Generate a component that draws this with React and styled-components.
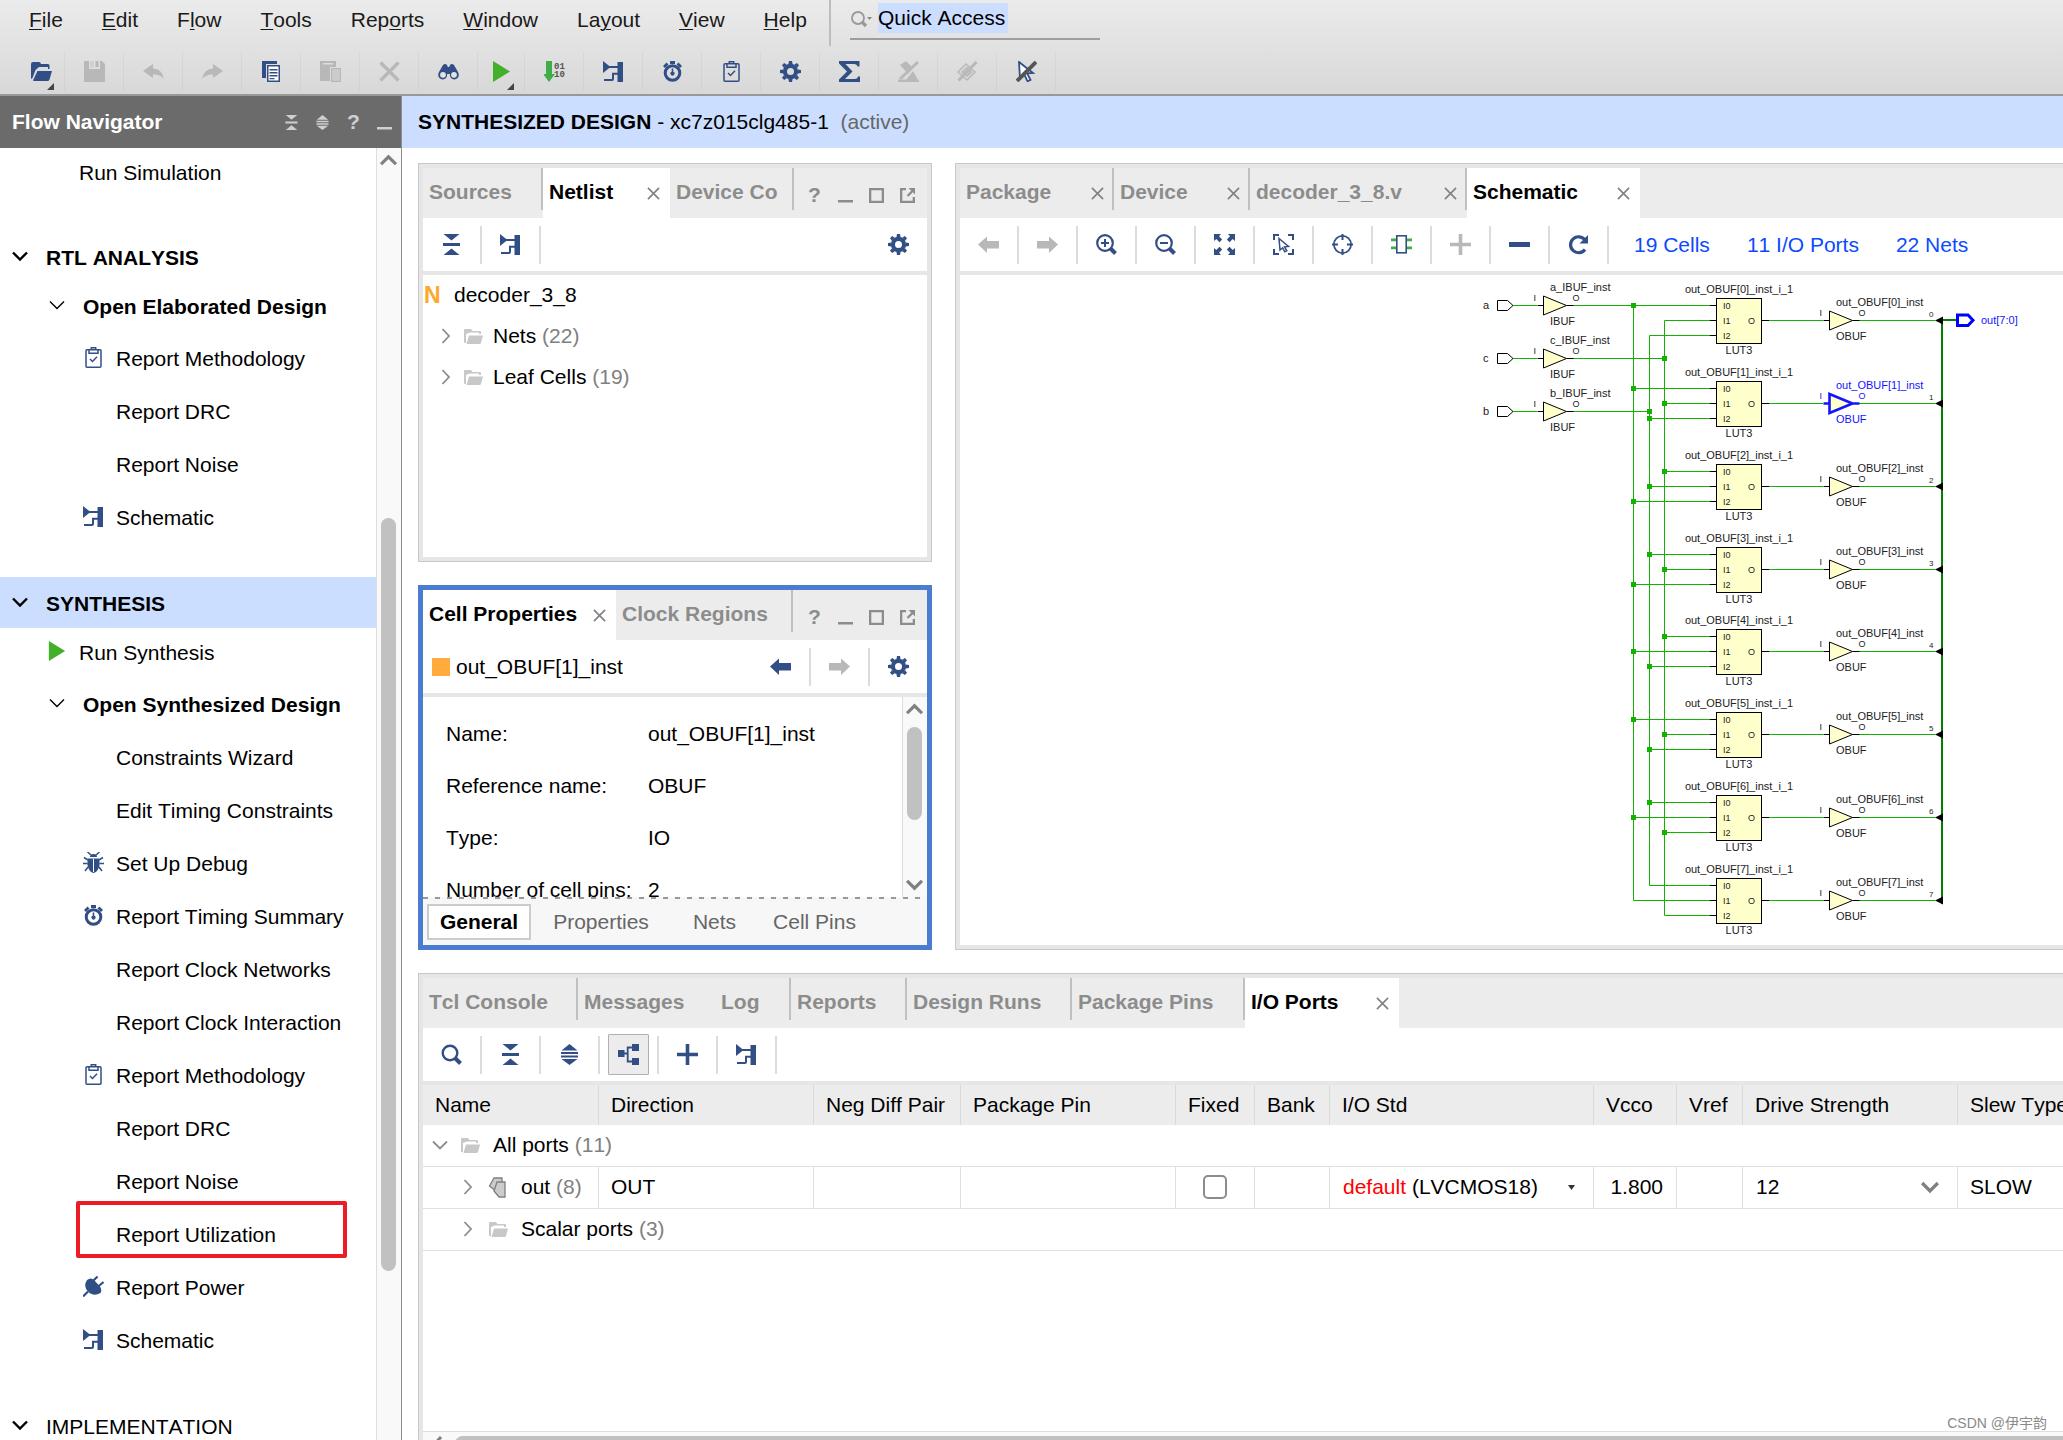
import React from "react";
import styled, { createGlobalStyle } from "styled-components";

const BLUE = "#324f85";
const GREY = "#b8b8b8";
const DIM = "#8c8c8c";

const GlobalStyle = createGlobalStyle`
  *, *::before, *::after { box-sizing: border-box; }
  html, body { margin: 0; padding: 0; }
  body {
    font-family: "Liberation Sans", "Noto Sans CJK SC", sans-serif;
    font-size: 21px;
    line-height: 24px;
    font-kerning: none;
    color: #000;
    background: #fff;
  }
  button, input, select {
    font: inherit;
    font-kerning: none;
    color: inherit;
    background: none;
    border: 0;
    padding: 0;
    margin: 0;
    border-radius: 0;
    outline: none;
  }
  svg { display: block; flex: none; }
`;

/* ---------- icons ---------- */

const Icon = ({ size = 21, color = BLUE, children, ...rest }) => (
  <svg width={size} height={size} viewBox="0 0 21 21" fill={color} stroke="none" aria-hidden="true" {...rest}>
    {children}
  </svg>
);

const FolderOpen = (p) => (
  <Icon {...p}>
    <path d="M0 3q0-2 2-2h6q1.500 0 2 2h7q1.500 0 1.500 1.500V8H17V6H8L4.500 9 1.500 17 0 18z" />
    <path d="M6.500 10H21l-2.500 8.500q-.4 1.500-2 1.500H2.800q-1 0-.6-1z" />
  </Icon>
);
const Folder = (p) => (
  <Icon color="#c8c8c8" {...p}>
    <path d="M1 4q0-1 1-1h6l1.500 2H17q1 0 1 1v2h-2V6.500H7L3 8v9H2q-1 0-1-1z" />
    <path d="M6 9.500h14L18 17q-.3 1-1.500 1H3.500z" />
  </Icon>
);
const Save = (p) => (
  <Icon color={GREY} {...p}>
    <path d="M0 0h5v8h11V0h2l3 3v18H0z" />
    <path d="M11.500 0h3v6h-3z" />
    <path d="M6 0h4v6.500H6z" opacity=".35" />
  </Icon>
);
const Undo = (p) => (
  <Icon color={GREY} {...p}>
    <path d="M0 10l10-7v4.500q9 0 11 10.500-4-5-11-4.500V17z" />
  </Icon>
);
const Redo = (p) => (
  <Icon color={GREY} {...p}>
    <path d="M21 10L11 3v4.500Q2 7.500 0 18q4-5 11-4.500V17z" />
  </Icon>
);
const Copy = (p) => (
  <Icon {...p}>
    <path d="M1 0h15v3H5v14H1z" />
    <path d="M6 4h13v17H6z" />
    <path d="M7.500 5.500h10v14h-10z" fill="#fff" />
    <path d="M8.500 8h8v1.500h-8zM8.500 11h8v1.500h-8zM8.500 14h8v1.500h-8zM8.500 17h5v1.300h-5z" />
  </Icon>
);
const Paste = (p) => (
  <Icon color={GREY} {...p}>
    <path d="M0 0h16v6h-6v14H0z" />
    <path d="M3 2h10v1.500H3z" fill="#ddd" />
    <path d="M11 7h10v14H11z" />
    <path d="M12.200 8.200h7.600v11.600h-7.600z" fill="#ccc" />
  </Icon>
);
const Cross = (p) => (
  <Icon {...p}>
    <path d="M1.500 1.500l18 18M19.500 1.500l-18 18" stroke={p.color || GREY} strokeWidth={p.weight || 3.4} fill="none" />
  </Icon>
);
const Binoculars = (p) => (
  <Icon {...p}>
    <path d="M5 4q2-2 4 0l.8 2h1.400L12 4q2-2 4 0l4 7q2 4-1 6.500-3.500 2-6-.5-1.500-2-1-4H9q.5 2-1 4-2.500 2.500-6 .5-3-2.500-1-6.500z" />
    <circle cx="5" cy="13.800" r="2.900" fill="#e4e4e4" />
    <circle cx="16" cy="13.800" r="2.900" fill="#e4e4e4" />
  </Icon>
);
const Play = (p) => (
  <Icon color="#43b02a" {...p}>
    <path d="M2 0l17 10.500L2 21z" />
  </Icon>
);
const Bitstream = (p) => (
  <Icon color="#3fae49" {...p}>
    <path d="M2 0h6v13h3L5 21-1 13h3z" />
    <g fill="#555" fontFamily="Liberation Mono, monospace" fontSize="9" fontWeight="700">
      <text x="10" y="8">01</text>
      <text x="10" y="16">10</text>
    </g>
  </Icon>
);
const SchematicIcon = (p) => (
  <Icon {...p}>
    <path d="M0 0l7.500 6L0 12z" />
    <path d="M14.500 1H20v20h-5.500z" />
    <path d="M6 5h9v2H6zM12.500 11.800H15v2h-2.500zM9 11.800h5v2h-3V18q0 2-2 2H1v-2h8z" />
  </Icon>
);
const Clock = (p) => (
  <Icon {...p}>
    <path d="M8 0h5v3H8zM1 5l3.500-3.500 2 2L3 7zM20 5l-3.500-3.500-2 2L18 7z" />
    <circle cx="10.500" cy="12" r="7.300" fill="none" stroke={BLUE} strokeWidth="3" />
    <path d="M9.700 7.500h1.600v3.200a2 2 0 1 1-1.600 0z" />
  </Icon>
);
const Clipboard = (p) => (
  <Icon {...p}>
    <g fill="none" stroke={BLUE} strokeWidth="1.500">
      <rect x="3" y="2.800" width="15" height="17.400" rx="1" />
      <path d="M6 3v3.200h9V3M8.300 3V.8h4.400V3" />
      <path d="M7 12l2.500 2.500L14 9.800" />
    </g>
  </Icon>
);
const GEAR_TEETH = [0, 45, 90, 135, 180, 225, 270, 315];
const Gear = (p) => (
  <Icon {...p}>
    <circle cx="10.500" cy="10.500" r="5.600" fill="none" stroke={BLUE} strokeWidth="4.200" />
    {GEAR_TEETH.map((a) => (
      <path key={a} d="M8.400 3.200L9 0h3l.6 3.200z" transform={`rotate(${a} 10.500 10.500)`} />
    ))}
  </Icon>
);
const Sigma = (p) => (
  <Icon {...p}>
    <path d="M0 0h20.500v5.500h-2Q18 3 15 3H6.500l7 7.500L6 18h9.500q3 0 3.500-2.500h2V21H0v-2.500l8-8L0 2.500z" />
  </Icon>
);
const NoMark = (p) => (
  <Icon color="#b9b9b9" {...p}>
    <path d="M2 4l6-4 7 7-5 6zM8 19l7-9 5 9z" />
    <path d="M0 18.500h21V21H0z" />
    <path d="M20 1L2 18" stroke="#b9b9b9" strokeWidth="3" />
  </Icon>
);
const NoLink = (p) => (
  <Icon color="none" {...p}>
    <g stroke="#b9b9b9" strokeWidth="1.600">
      <path d="M1 11l8-8 9 8-8 8z" />
      <path d="M5 11l5-4.500 4.500 4.500L10 15z" fill="#c4c4c4" />
      <path d="M19.500 1L1.500 19.500" strokeWidth="3.200" />
    </g>
  </Icon>
);
const NoCursor = (p) => (
  <Icon {...p}>
    <path d="M3 1l14 11-6 .3 3.500 6.500-3 1.500-3-6.500L4 18z" fill="#fff" stroke={BLUE} strokeWidth="1.800" />
    <path d="M20 1L1 20" stroke="#555" strokeWidth="3.800" />
  </Icon>
);
const CollapseAll = (p) => (
  <Icon {...p}>
    <path d="M2.500 0h16l-8 6.500zM2 9h17v3H2zM2.500 21h16l-8-6.500z" />
  </Icon>
);
const ExpandAll = (p) => (
  <Icon {...p}>
    <path d="M2.500 6.500h16l-8-6.500zM2 8h17v2H2zM2 11.500h17v2H2zM2.500 15h16l-8 6z" />
  </Icon>
);
const Minimise = (p) => (
  <Icon {...p}>
    <path d="M3 15h15v2.500H3z" />
  </Icon>
);
const Maximise = (p) => (
  <Icon {...p}>
    <path d="M3 3h15v15H3zM5.300 5.300v10.400h10.400V5.300z" fillRule="evenodd" />
  </Icon>
);
const PopOut = (p) => (
  <Icon {...p}>
    <path d="M3 3h6v2.300H5.300v10.400h10.400V12H18v6H3z" />
    <path d="M11.500 3H18v6.500l-2.200-2.200-4.500 4.500-1.600-1.600 4.500-4.500z" />
  </Icon>
);
const Search = (p) => (
  <Icon {...p}>
    <circle cx="9" cy="9" r="7.300" fill="none" stroke={p.color || BLUE} strokeWidth="2.400" />
    <path d="M14 14l5.500 5.500" stroke={p.color || BLUE} strokeWidth="4" />
  </Icon>
);
const Hierarchy = (p) => (
  <Icon {...p}>
    <path d="M0 6h6.500v7H0zM14 0h7v7h-7zM14 14h7v7h-7z" />
    <path d="M6 9.500h3.500M14 3.500H9.700v14H14" fill="none" stroke={BLUE} strokeWidth="1.800" />
  </Icon>
);
const Plus = (p) => (
  <Icon {...p}>
    <path d="M8.700 0h3.600v8.700H21v3.600h-8.700V21H8.700v-8.700H0V8.700h8.700z" />
  </Icon>
);
const Minus = (p) => (
  <Icon {...p}>
    <path d="M0 8h21v5H0z" />
  </Icon>
);
const ArrowLeft = (p) => (
  <Icon {...p}>
    <path d="M0 10.500L9 2.500V7h12v7.500H9V19z" />
  </Icon>
);
const ArrowRight = (p) => (
  <Icon {...p}>
    <path d="M21 10.500L12 2.500V7H0v7.500h12V19z" />
  </Icon>
);
const Zoom = ({ plus, ...p }) => (
  <Icon {...p}>
    <circle cx="9" cy="9" r="7.800" fill="none" stroke={BLUE} strokeWidth="2.200" />
    <path d="M5 8h8v2H5z" />
    {plus && <path d="M8 5h2v8H8z" />}
    <path d="M14.500 14.500l5 5" stroke={BLUE} strokeWidth="4" />
  </Icon>
);
const Fit = (p) => (
  <Icon {...p}>
    {[0, 90, 180, 270].map((a) => (
      <path key={a} d="M0 0h7L5 2.300 8.200 5.500 5.500 8.200 2.300 5 0 7z" transform={`rotate(${a} 10.500 10.500)`} />
    ))}
  </Icon>
);
const FitSelection = (p) => (
  <Icon {...p}>
    <path d="M1 6V1h5M15 1h5v5M20 15v5h-5M6 20H1v-5" fill="none" stroke={BLUE} strokeWidth="2" />
    <path d="M6 4.500l9.500 8-4 .3 2.300 4-2 1-2.200-4L7 16z" fill="#fff" stroke={BLUE} strokeWidth="1.500" />
  </Icon>
);
const Target = (p) => (
  <Icon {...p}>
    <circle cx="10.500" cy="10.500" r="8.600" fill="none" stroke={BLUE} strokeWidth="1.700" />
    <path d="M10.500 0v6M10.500 15v6M0 10.500h6M15 10.500h6" stroke={BLUE} strokeWidth="2" />
  </Icon>
);
const Chip = (p) => (
  <Icon color="#3fae49" {...p}>
    <path d="M0 4.500h21v2.800H0zM0 12.500h21v2.800H0z" />
    <rect x="5.800" y="1.800" width="9.400" height="17" fill="#fff" stroke={BLUE} strokeWidth="1.600" />
  </Icon>
);
const Reload = (p) => (
  <Icon {...p}>
    <path d="M17 15.500a8 8 0 1 1 0-9.500" fill="none" stroke={BLUE} strokeWidth="3.200" />
    <path d="M20 1v8.500h-8.500z" />
  </Icon>
);
const Bug = (p) => (
  <Icon {...p}>
    <path d="M7 5q0-3 3.500-3T14 5zM5 6.500h11q1.500 6-.5 10-2 4-5 4.500-3-.5-5-4.500-2-4-.5-10z" />
    <path d="M8 3L4.500 0M13 3L16.500 0M5 8L1 5.500M16 8l4-2.500M4.500 11.500H0M16.500 11.500H21M5 15l-3 4M16 15l3 4" stroke={BLUE} strokeWidth="1.500" fill="none" />
    <path d="M10 7h1v13h-1z" fill="#fff" />
  </Icon>
);
const Plug = (p) => (
  <Icon {...p}>
    <path d="M4 4q4-3 7 0l5.500 6q3 3.500 1 7-6 3.500-11 0Q-.5 11 4 4z" />
    <path d="M0 20.500l5-5M9.500 5.500l5-5M14.500 11l6-5" stroke={BLUE} strokeWidth="2.200" />
  </Icon>
);
const PortBus = (p) => (
  <Icon color="#ccc" {...p}>
    <path d="M6 1h8v13H8L1.500 9z" stroke="#808080" strokeWidth="1.300" />
    <path d="M9 5h8v15h-6l-5-6z" stroke="#808080" strokeWidth="1.300" />
  </Icon>
);
const Chevron = ({ dir = "down", color = "#000", weight = 2, size = 16 }) => {
  const d = {
    down: "M1 4.500l7 7 7-7",
    up: "M1 11.500l7-7 7 7",
    right: "M4.500 1l6.500 7-6.500 7",
    left: "M11 1L4.500 8l6.500 7",
  }[dir];
  return (
    <svg width={size} height={size} viewBox="0 0 16 16" aria-hidden="true">
      <path d={d} fill="none" stroke={color} strokeWidth={weight} />
    </svg>
  );
};

/* ---------- application frame ---------- */

const Screen = styled.div`
  position: relative;
  display: flex;
  flex-direction: column;
  height: 100vh;
  overflow: hidden;
`;
const TopBar = styled.header`
  flex: none;
  background: linear-gradient(#ebebeb, #d8d8d8);
  border-bottom: 2px solid #999;
`;
const MenuRow = styled.div`
  display: flex;
  height: 46px;
`;
const Menu = styled.nav`
  display: flex;
  align-items: center;
  gap: 39px;
  width: 831px;
  padding: 0 0 6px 29px;
  border-right: 2px solid #bdbdbd;
`;
const MenuItem = styled.button`
  color: #1a1a1a;
  u {
    text-decoration-thickness: 1px;
    text-underline-offset: 2px;
  }
`;
const QuickAccess = styled.label`
  display: flex;
  align-items: flex-start;
  width: 250px;
  height: 40px;
  margin-left: 19px;
  padding-top: 3px;
  border-bottom: 2px solid #9e9e9e;
  svg { margin: 7px 4px 0 0; }
`;
const QuickInput = styled.input`
  width: 130px;
  height: 30px;
  background: #ccdeff;
`;
const MainTools = styled.div`
  display: flex;
  padding: 6px 0 4px 18px;
`;
const MainTool = styled.button`
  position: relative;
  display: flex;
  align-items: center;
  justify-content: center;
  width: ${(p) => (p.$narrow ? 47 : 59)}px;
  height: 38px;
  border-right: 1px solid rgba(0, 0, 0, 0.04);
`;
const Corner = styled.svg`
  position: absolute;
  right: 10px;
  bottom: 0;
`;
const Body = styled.div`
  display: flex;
  flex: 1;
  min-height: 0;
`;

/* ---------- flow navigator ---------- */

const Navigator = styled.aside`
  display: flex;
  flex-direction: column;
  flex: none;
  width: 402px;
  border-right: 1px solid #8f8f8f;
`;
const NavHead = styled.div`
  display: flex;
  align-items: center;
  flex: none;
  height: 52px;
  padding: 0 1px 0 12px;
  color: #fff;
  background: #6b6b6b;
  font-weight: 700;
`;
const Grow = styled.span`
  flex: 1;
`;
const HeadButton = styled.button`
  display: flex;
  align-items: center;
  justify-content: center;
  width: 31px;
  height: 31px;
  color: ${(p) => p.$tone};
  font-weight: 700;
`;
const NavBody = styled.div`
  display: flex;
  flex: 1;
  min-height: 0;
`;
const NavScroll = styled.div`
  flex: 1;
  overflow: hidden;
`;
const NavSection = styled.section`
  margin-bottom: 32px;
`;
const SectionHead = styled.button`
  display: flex;
  align-items: center;
  gap: 18px;
  width: 100%;
  height: 51px;
  padding: 3px 0 0 12px;
  font-weight: ${(p) => (p.$bold ? 700 : 400)};
  background: ${(p) => (p.$selected ? "#ccdeff" : "transparent")};
  svg { margin-bottom: 4px; }
`;
const NavList = styled.ul`
  margin: 0;
  padding: 0;
  list-style: none;
`;
const INDENT = { run: 47, group: 49, item: 83 };
const SLOT = { run: 19, group: 16, item: 21 };
const SLOT_GAP = { run: 13, group: 18, item: 12 };
const NavRow = styled.li`
  position: relative;
  height: 53px;
  &:first-child { height: 51px; }
`;
const NavButton = styled.button`
  display: flex;
  align-items: center;
  gap: ${(p) => SLOT_GAP[p.$kind]}px;
  width: 100%;
  height: 100%;
  padding: 0 0 1px ${(p) => INDENT[p.$kind]}px;
  font-weight: ${(p) => (p.$kind === "group" ? 700 : 400)};
  white-space: nowrap;
`;
const IconSlot = styled.span`
  display: flex;
  justify-content: center;
  flex: none;
  width: ${(p) => SLOT[p.$kind]}px;
  margin-bottom: 4px;
`;
const Marker = styled.span`
  position: absolute;
  left: 76px;
  top: -8px;
  width: 271px;
  height: 57px;
  border: 4px solid #ed1c24;
  border-radius: 2px;
  pointer-events: none;
`;
const ScrollTrack = styled.div`
  display: flex;
  flex-direction: column;
  align-items: center;
  flex: none;
  width: 25px;
  padding: 4px 2px 4px 0;
  background: #f9f9f9;
  border-left: 1px solid #dedede;
`;
const ScrollThumb = styled.div`
  width: 15px;
  margin-top: ${(p) => p.$top}px;
  height: ${(p) => p.$size};
  border-radius: 8px;
  background: #c1c1c1;
`;

/* ---------- workspace ---------- */

const Workspace = styled.main`
  display: flex;
  flex-direction: column;
  flex: 1;
  min-width: 0;
`;
const DesignTitle = styled.h1`
  flex: none;
  margin: 0;
  padding-left: 16px;
  font-size: 21px;
  font-weight: 400;
  line-height: 52px;
  white-space: pre;
  background: #ccdeff;
  span { color: #666; }
`;
const Docks = styled.div`
  display: grid;
  flex: 1;
  min-height: 0;
  grid-template-columns: 514px minmax(0, 1fr);
  grid-template-rows: minmax(0, 399fr) minmax(0, 365fr) minmax(0, 487fr);
  gap: 23px;
  padding: 15px 0 0 16px;
  margin-bottom: -20px;
`;
const Panel = styled.section`
  display: flex;
  flex-direction: column;
  min-width: 0;
  min-height: 0;
  border: 1px solid #c8c8c8;
  background: #e6e6e6;
  padding: 4px;
  ${(p) => p.$open && "border-right: 0; padding-right: 0;"}
  ${(p) => p.$focused && "border: 5px solid #4a7dcf; padding: 0;"}
`;
const TallPanel = styled(Panel)`
  grid-column: 2;
  grid-row: 1 / span 2;
`;
const WidePanel = styled(Panel)`
  grid-column: 1 / span 2;
`;
const TabStrip = styled.div`
  display: flex;
  flex: none;
  height: 50px;
  background: #ececec;
`;
const Tab = styled.div`
  display: flex;
  align-items: center;
  flex: none;
  width: ${(p) => p.$width}px;
  padding: 0 10px 2px 6px;
  overflow: hidden;
  background: ${(p) => (p.$active ? "#fff" : p.$rule ? "linear-gradient(#c0c0c0, #c0c0c0) right top / 2px 42px no-repeat" : "none")};
`;
const TabLabel = styled.button`
  flex: 1;
  text-align: left;
  font-weight: 700;
  white-space: nowrap;
  color: ${(p) => (p.$active ? "#000" : DIM)};
`;
const CloseButton = styled.button`
  flex: none;
  padding-top: 2px;
`;
const WindowButtons = styled.div`
  display: flex;
  align-items: center;
  margin-left: auto;
  padding: 4px 4px 0 0;
`;
const ToolStrip = styled.div`
  display: flex;
  align-items: center;
  flex: none;
  height: 57px;
  background: #fff;
  border-bottom: 4px solid #e6e6e6;
`;
const RULE_SIDE = {
  right: "border-right: 2px solid #dcdcdc;",
  left: "border-left: 2px solid #dcdcdc;",
  none: "padding-left: 2px;",
};
const Tool = styled.button`
  display: flex;
  align-items: center;
  justify-content: center;
  flex: none;
  width: 59px;
  height: 38px;
  ${(p) => RULE_SIDE[p.$rule || "right"]}
`;
const Pressed = styled.span`
  display: flex;
  align-items: center;
  justify-content: center;
  flex: none;
  width: 41px;
  height: 41px;
  border: 1px solid #b0b0b0;
  border-radius: 1px;
  background: #ececec;
`;
const Pane = styled.div`
  flex: 1;
  min-height: 0;
  overflow: hidden;
  background: #fff;
`;
const TreeLine = styled.div`
  display: flex;
  align-items: center;
  gap: ${(p) => p.$gap}px;
  height: 41px;
  padding: 0 0 1px ${(p) => p.$indent}px;
  white-space: nowrap;
`;
const Count = styled.span`
  color: #808080;
`;
const NetlistMark = styled.span`
  width: 21px;
  color: #fba82c;
  font-size: 23px;
  font-weight: 700;
`;
const Swatch = styled.span`
  width: 18px;
  height: 18px;
  margin: 0 6px 0 9px;
  background: #ffab3d;
`;
const PropsPane = styled(Pane)`
  display: flex;
`;
const Fields = styled.dl`
  display: grid;
  grid-template-columns: 202px 1fr;
  grid-auto-rows: 52px;
  align-items: center;
  flex: 1;
  margin: 0;
  padding: 11px 0 0 23px;
  overflow: hidden;
  white-space: nowrap;
  dt, dd { margin: 0; }
`;
const FootTabs = styled.div`
  display: flex;
  align-items: center;
  flex: none;
  height: 48px;
  padding: 1px 0 0 4px;
  background:
    repeating-linear-gradient(90deg, #999 0 5px, transparent 5px 12px) left top / 100% 2px no-repeat,
    #f7f7f7;
`;
const FootTab = styled.button`
  width: ${(p) => p.$width}px;
  height: 36px;
  text-align: center;
  white-space: nowrap;
  color: ${(p) => (p.$active ? "#000" : "#666")};
  font-weight: ${(p) => (p.$active ? 700 : 400)};
  background: ${(p) => (p.$active ? "#fff" : "none")};
  border: ${(p) => (p.$active ? "2px solid #ccc" : 0)};
`;
const Stats = styled.div`
  display: flex;
  gap: 37px;
  padding-left: 25px;
  white-space: nowrap;
  a {
    color: #0a4bff;
    text-decoration: none;
  }
`;

/* ---------- ports table ---------- */

const PortsTable = styled.table`
  width: 1750px;
  table-layout: fixed;
  border-collapse: separate;
  border-spacing: 0;
  th, td {
    padding: 0 0 1px 12px;
    white-space: nowrap;
    text-align: left;
    font-weight: 400;
  }
  th {
    height: 40px;
    background: #ececec;
    border-right: 1px solid #dadada;
  }
  td {
    height: 42px;
    border-bottom: 1px solid #e0e0e0;
    border-right: 1px solid #e0e0e0;
  }
  td.tree { padding: 0; }
  td.num { padding: 0 13px 1px 0; text-align: right; }
`;
const Check = styled.input`
  appearance: none;
  display: block;
  width: 24px;
  height: 24px;
  margin: 0 0 0 15px;
  border: 2px solid #8c8c8c;
  border-radius: 5px;
  background: #fff;
`;
const StdPicker = styled.button`
  display: flex;
  align-items: center;
  justify-content: space-between;
  width: 100%;
  padding: 0 18px 0 1px;
  b { font-weight: 400; color: #f00; }
`;
const SelectBox = styled.span`
  display: flex;
  align-items: center;
  padding: 0 18px 0 1px;
`;
const Select = styled.select`
  appearance: none;
  flex: 1;
`;
const BottomScroll = styled.div`
  display: flex;
  align-items: center;
  gap: 9px;
  flex: none;
  height: 24px;
  padding-left: 7px;
  background: #f9f9f9;
  border-top: 1px solid #dedede;
`;
const BottomThumb = styled.div`
  flex: 1;
  height: 15px;
  border-radius: 8px 0 0 8px;
  background: #c1c1c1;
`;
const Watermark = styled.div`
  position: absolute;
  right: 16px;
  bottom: 7px;
  font-size: 14px;
  line-height: 20px;
  color: #8a8a8a;
`;

/* ---------- schematic drawing ---------- */

const WIRE = "#12b300";
const TRUNK = { a: 1633.5, b: 1649.5, c: 1664.5 };
const LUTS = [
  { y: 320.5, pins: "acb", dots: "a" },
  { y: 403.5, pins: "acb", dots: "abc" },
  { y: 486.5, pins: "cba", dots: "abc" },
  { y: 569.5, pins: "bca", dots: "abc" },
  { y: 651.5, pins: "cab", dots: "abc" },
  { y: 734.5, pins: "acb", dots: "abc" },
  { y: 817.5, pins: "bac", dots: "abc" },
  { y: 900.5, pins: "bac", dots: "" },
];
const INPUTS = [
  { name: "a", y: 305.5, dot: false },
  { name: "c", y: 358.5, dot: true },
  { name: "b", y: 411.5, dot: true },
];

const Dot = ({ x, y }) => <rect x={x - 2.5} y={y - 2.5} width="5" height="5" fill={WIRE} />;

const Buffer = ({ x, y, name, type, selected }) => {
  const ink = selected ? "#1414ff" : "#000";
  return (
    <g fill={selected ? "#1414ff" : "#222"} fontSize="11">
      <path
        d={`M${x - 6} ${y}H${x}M${x + 23} ${y}h7M${x} ${y - 9.5}v19l23-9.500z`}
        fill="#ffffcc"
        stroke={ink}
        strokeWidth={selected ? 2.6 : 1}
      />
      <text x={x + 6.5} y={y - 14.5}>{name}</text>
      <text x={x - 10} y={y - 4.5} fontSize="9">I</text>
      <text x={x + 29} y={y - 4.5} fontSize="9">O</text>
      <text x={x + 6.5} y={y + 19.5}>{type}</text>
    </g>
  );
};

const Lut = ({ index, y, pins, dots }) => (
  <g>
    {[...pins].map((net, i) => {
      const py = y - 15 + i * 15;
      return (
        <g key={i}>
          <path d={`M${TRUNK[net]} ${py}H1710`} stroke={WIRE} />
          <path d={`M1710 ${py}h6`} stroke="#000" />
          {dots.includes(net) && <Dot x={TRUNK[net]} y={py} />}
        </g>
      );
    })}
    <rect x="1716.500" y={y - 22} width="45" height="45" fill="#ffffcc" stroke="#000" />
    <g fill="#222">
      {[0, 1, 2].map((i) => (
        <text key={i} x="1723" y={y - 12 + i * 15} fontSize="9">I{i}</text>
      ))}
      <text x="1748" y={y + 3} fontSize="9">O</text>
      <text x="1739" y={y - 28} fontSize="11" textAnchor="middle">{`out_OBUF[${index}]_inst_i_1`}</text>
      <text x="1739" y={y + 33} fontSize="11" textAnchor="middle">LUT3</text>
      <text x="1929" y={y - 4} fontSize="8">{index}</text>
    </g>
    <path d={`M1762 ${y}h7`} stroke="#000" />
    <path d={`M1769 ${y}h54M1859 ${y}h76`} stroke={WIRE} />
    <path d={`M1935 ${y}l8-4v8z`} fill="#000" />
    <Buffer x={1829.5} y={y} name={`out_OBUF[${index}]_inst`} type="OBUF" selected={index === 1} />
  </g>
);

const SchematicDrawing = () => (
  <svg width="1103" height="670" viewBox="960 275 1103 670" fontFamily="Liberation Sans, sans-serif" role="img" aria-label="decoder_3_8 schematic">
    <path d="M1633.500 305.500V900.500M1649.500 335.500V885.500M1664.500 320.500V915.500" stroke={WIRE} fill="none" />
    <path d="M1942 320V904M1942 320h14" stroke="#008000" strokeWidth="2" fill="none" />
    {INPUTS.map(({ name, y, dot }) => (
      <g key={name}>
        <text x="1483" y={y + 3} fontSize="11" fill="#222">{name}</text>
        <path d={`M1497.500 ${y - 5}h10l5.500 5-5.500 5h-10z`} fill="#fff" stroke="#000" />
        <path d={`M1513 ${y}h24M1573 ${y}H${TRUNK[name]}`} stroke={WIRE} />
        {dot && <Dot x={TRUNK[name]} y={y} />}
        <Buffer x={1543.5} y={y} name={`${name}_IBUF_inst`} type="IBUF" />
      </g>
    ))}
    {LUTS.map((lut, i) => (
      <Lut key={i} index={i} {...lut} />
    ))}
    <path d="M1957.500 315h10.500l5 5.200-5 5.300h-10.500z" fill="#fff" stroke="#0000ff" strokeWidth="3" />
    <text x="1981" y="324" fontSize="11" fill="#1414ff">out[7:0]</text>
  </svg>
);

/* ---------- data ---------- */

const MENUS = [
  ["", "F", "ile"],
  ["", "E", "dit"],
  ["F", "l", "ow"],
  ["", "T", "ools"],
  ["Rep", "o", "rts"],
  ["", "W", "indow"],
  ["La", "y", "out"],
  ["", "V", "iew"],
  ["", "H", "elp"],
];

const MAIN_TOOLS = [
  { label: "Open", icon: <FolderOpen />, narrow: true, corner: true },
  { label: "Save", icon: <Save /> },
  { label: "Undo", icon: <Undo /> },
  { label: "Redo", icon: <Redo /> },
  { label: "Copy", icon: <Copy /> },
  { label: "Paste", icon: <Paste /> },
  { label: "Delete", icon: <Cross /> },
  { label: "Find", icon: <Binoculars /> },
  { label: "Run", icon: <Play />, narrow: true, corner: true },
  { label: "Generate Bitstream", icon: <Bitstream /> },
  { label: "Schematic", icon: <SchematicIcon /> },
  { label: "Timing", icon: <Clock /> },
  { label: "Methodology", icon: <Clipboard /> },
  { label: "Settings", icon: <Gear /> },
  { label: "Summary", icon: <Sigma /> },
  { label: "Unmark", icon: <NoMark /> },
  { label: "Unhighlight", icon: <NoLink /> },
  { label: "Unselect", icon: <NoCursor /> },
];

const play = <Play size={20} />;
const thin = <Chevron weight={1.4} />;
const NAV = [
  { rows: [{ kind: "run", text: "Run Simulation" }] },
  {
    title: "RTL ANALYSIS",
    bold: true,
    rows: [
      { kind: "group", text: "Open Elaborated Design", icon: thin },
      { kind: "item", text: "Report Methodology", icon: <Clipboard /> },
      { kind: "item", text: "Report DRC" },
      { kind: "item", text: "Report Noise" },
      { kind: "item", text: "Schematic", icon: <SchematicIcon /> },
    ],
  },
  {
    title: "SYNTHESIS",
    bold: true,
    selected: true,
    rows: [
      { kind: "run", text: "Run Synthesis", icon: play },
      { kind: "group", text: "Open Synthesized Design", icon: thin },
      { kind: "item", text: "Constraints Wizard" },
      { kind: "item", text: "Edit Timing Constraints" },
      { kind: "item", text: "Set Up Debug", icon: <Bug /> },
      { kind: "item", text: "Report Timing Summary", icon: <Clock /> },
      { kind: "item", text: "Report Clock Networks" },
      { kind: "item", text: "Report Clock Interaction" },
      { kind: "item", text: "Report Methodology", icon: <Clipboard /> },
      { kind: "item", text: "Report DRC" },
      { kind: "item", text: "Report Noise" },
      { kind: "item", text: "Report Utilization", marked: true },
      { kind: "item", text: "Report Power", icon: <Plug /> },
      { kind: "item", text: "Schematic", icon: <SchematicIcon /> },
    ],
  },
  { title: "IMPLEMENTATION", rows: [] },
];

const COLUMNS = [
  ["Name", 176],
  ["Direction", 215],
  ["Neg Diff Pair", 147],
  ["Package Pin", 215],
  ["Fixed", 79],
  ["Bank", 75],
  ["I/O Std", 264],
  ["Vcco", 83],
  ["Vref", 66],
  ["Drive Strength", 215],
  ["Slew Type", 215],
];

/* ---------- composed parts ---------- */

const Tabs = ({ items, windowButtons }) => (
  <TabStrip role="tablist">
    {items.map((t) => (
      <Tab key={t.text} $width={t.width} $active={t.active} $rule={t.rule}>
        <TabLabel role="tab" aria-selected={!!t.active} $active={t.active}>{t.text}</TabLabel>
        {t.close && (
          <CloseButton aria-label={`Close ${t.text}`}>
            <Cross size={13} color="#808080" weight={2.6} />
          </CloseButton>
        )}
      </Tab>
    ))}
    {windowButtons && (
      <WindowButtons>
        <HeadButton $tone={DIM} aria-label="Help">?</HeadButton>
        <HeadButton aria-label="Minimise"><Minimise color={DIM} /></HeadButton>
        <HeadButton aria-label="Maximise"><Maximise color={DIM} /></HeadButton>
        <HeadButton aria-label="Float"><PopOut color={DIM} /></HeadButton>
      </WindowButtons>
    )}
  </TabStrip>
);

const FlowNavigator = () => (
  <Navigator>
    <NavHead>
      Flow Navigator
      <Grow />
      <HeadButton aria-label="Collapse all"><CollapseAll size={15} color="#cfcfcf" /></HeadButton>
      <HeadButton aria-label="Expand all"><ExpandAll size={15} color="#cfcfcf" /></HeadButton>
      <HeadButton $tone="#cfcfcf" aria-label="Help">?</HeadButton>
      <HeadButton aria-label="Minimise"><Minimise color="#cfcfcf" /></HeadButton>
    </NavHead>
    <NavBody>
      <NavScroll>
        {NAV.map((s, i) => (
          <NavSection key={i}>
            {s.title && (
              <SectionHead $bold={s.bold} $selected={s.selected}>
                <Chevron weight={2.4} />
                {s.title}
              </SectionHead>
            )}
            <NavList>
              {s.rows.map((r) => (
                <NavRow key={r.text}>
                  <NavButton $kind={r.kind}>
                    <IconSlot $kind={r.kind}>{r.icon}</IconSlot>
                    {r.text}
                  </NavButton>
                  {r.marked && <Marker />}
                </NavRow>
              ))}
            </NavList>
          </NavSection>
        ))}
      </NavScroll>
      <ScrollTrack>
        <Chevron dir="up" color="#808080" weight={3} size={17} />
        <ScrollThumb $top={349} $size="753px" />
      </ScrollTrack>
    </NavBody>
  </Navigator>
);

const NetlistPanel = () => (
  <Panel>
    <Tabs
      windowButtons
      items={[
        { text: "Sources", width: 120, rule: true },
        { text: "Netlist", width: 127, active: true, close: true },
        { text: "Device Co", width: 124, rule: true },
      ]}
    />
    <ToolStrip>
      <Tool aria-label="Collapse all"><CollapseAll /></Tool>
      <Tool aria-label="Schematic"><SchematicIcon /></Tool>
      <Grow />
      <Tool $rule="none" aria-label="Settings"><Gear /></Tool>
    </ToolStrip>
    <Pane>
      <TreeLine $gap={9} $indent={1}>
        <NetlistMark>N</NetlistMark>
        <span>decoder_3_8</span>
      </TreeLine>
      {[["Nets", 22], ["Leaf Cells", 19]].map(([name, n]) => (
        <TreeLine key={name} $gap={9} $indent={15}>
          <Chevron dir="right" color={DIM} weight={1.8} />
          <Folder />
          <span>{name} <Count>({n})</Count></span>
        </TreeLine>
      ))}
    </Pane>
  </Panel>
);

const CellPanel = () => (
  <Panel $focused>
    <Tabs
      windowButtons
      items={[
        { text: "Cell Properties", width: 193, active: true, close: true },
        { text: "Clock Regions", width: 177, rule: true },
      ]}
    />
    <ToolStrip>
      <Swatch />
      out_OBUF[1]_inst
      <Grow />
      <Tool $rule="none" aria-label="Back"><ArrowLeft /></Tool>
      <Tool $rule="left" aria-label="Forward"><ArrowRight color={GREY} /></Tool>
      <Tool $rule="left" aria-label="Settings"><Gear /></Tool>
    </ToolStrip>
    <PropsPane>
      <Fields>
        <dt>Name:</dt><dd>out_OBUF[1]_inst</dd>
        <dt>Reference name:</dt><dd>OBUF</dd>
        <dt>Type:</dt><dd>IO</dd>
        <dt>Number of cell pins:</dt><dd>2</dd>
      </Fields>
      <ScrollTrack>
        <Chevron dir="up" color="#808080" weight={3} size={17} />
        <ScrollThumb $top={9} $size="93px" />
        <Grow />
        <Chevron dir="down" color="#808080" weight={3} size={17} />
      </ScrollTrack>
    </PropsPane>
    <FootTabs role="tablist">
      <FootTab role="tab" $width={104} $active>General</FootTab>
      <FootTab role="tab" $width={140}>Properties</FootTab>
      <FootTab role="tab" $width={87}>Nets</FootTab>
      <FootTab role="tab" $width={113}>Cell Pins</FootTab>
    </FootTabs>
  </Panel>
);

const SchematicPanel = () => (
  <TallPanel $open>
    <Tabs
      items={[
        { text: "Package", width: 154, rule: true, close: true },
        { text: "Device", width: 136, rule: true, close: true },
        { text: "decoder_3_8.v", width: 217, rule: true, close: true },
        { text: "Schematic", width: 173, active: true, close: true },
      ]}
    />
    <ToolStrip>
      <Tool aria-label="Back"><ArrowLeft color={GREY} /></Tool>
      <Tool aria-label="Forward"><ArrowRight color={GREY} /></Tool>
      <Tool aria-label="Zoom in"><Zoom plus /></Tool>
      <Tool aria-label="Zoom out"><Zoom /></Tool>
      <Tool aria-label="Zoom fit"><Fit /></Tool>
      <Tool aria-label="Fit selection"><FitSelection /></Tool>
      <Tool aria-label="Autofit"><Target /></Tool>
      <Tool aria-label="Show cells"><Chip /></Tool>
      <Tool aria-label="Expand"><Plus color={GREY} /></Tool>
      <Tool aria-label="Collapse"><Minus /></Tool>
      <Tool aria-label="Regenerate"><Reload /></Tool>
      <Stats>
        <a href="#cells">19 Cells</a>
        <a href="#ports">11 I/O Ports</a>
        <a href="#nets">22 Nets</a>
      </Stats>
    </ToolStrip>
    <Pane>
      <SchematicDrawing />
    </Pane>
  </TallPanel>
);

const PortsPanel = () => (
  <WidePanel $open>
    <Tabs
      items={[
        { text: "Tcl Console", width: 155, rule: true },
        { text: "Messages", width: 137 },
        { text: "Log", width: 76, rule: true },
        { text: "Reports", width: 116, rule: true },
        { text: "Design Runs", width: 165, rule: true },
        { text: "Package Pins", width: 173, rule: true },
        { text: "I/O Ports", width: 154, active: true, close: true },
      ]}
    />
    <ToolStrip>
      <Tool aria-label="Search"><Search /></Tool>
      <Tool aria-label="Collapse all"><CollapseAll /></Tool>
      <Tool aria-label="Expand all"><ExpandAll /></Tool>
      <Tool aria-label="Group by interface" aria-pressed="true"><Pressed><Hierarchy /></Pressed></Tool>
      <Tool aria-label="Add"><Plus /></Tool>
      <Tool aria-label="Schematic"><SchematicIcon /></Tool>
    </ToolStrip>
    <Pane>
      <PortsTable>
        <colgroup>
          {COLUMNS.map(([name, w]) => <col key={name} width={w} />)}
        </colgroup>
        <thead>
          <tr>{COLUMNS.map(([name]) => <th key={name} scope="col">{name}</th>)}</tr>
        </thead>
        <tbody>
          <tr>
            <td className="tree" colSpan={11}>
              <TreeLine $gap={12} $indent={9}>
                <Chevron color={DIM} weight={1.8} />
                <Folder />
                <span>All ports <Count>(11)</Count></span>
              </TreeLine>
            </td>
          </tr>
          <tr>
            <td className="tree">
              <TreeLine $gap={12} $indent={37}>
                <Chevron dir="right" color={DIM} weight={1.8} />
                <PortBus />
                <span>out <Count>(8)</Count></span>
              </TreeLine>
            </td>
            <td>OUT</td>
            <td />
            <td />
            <td><Check type="checkbox" aria-label="Fixed" /></td>
            <td />
            <td>
              <StdPicker aria-haspopup="listbox">
                <span><b>default</b> (LVCMOS18)</span>
                <svg width="7" height="5" viewBox="0 0 7 5"><path d="M0 0h7L3.500 5z" fill="#333" /></svg>
              </StdPicker>
            </td>
            <td className="num">1.800</td>
            <td />
            <td>
              <SelectBox>
                <Select aria-label="Drive strength" defaultValue="12"><option>12</option></Select>
                <Chevron color="#808080" weight={3} size={18} />
              </SelectBox>
            </td>
            <td>SLOW</td>
          </tr>
          <tr>
            <td className="tree" colSpan={11}>
              <TreeLine $gap={12} $indent={37}>
                <Chevron dir="right" color={DIM} weight={1.8} />
                <Folder />
                <span>Scalar ports <Count>(3)</Count></span>
              </TreeLine>
            </td>
          </tr>
        </tbody>
      </PortsTable>
    </Pane>
    <BottomScroll>
      <Chevron dir="left" color="#808080" weight={3} />
      <BottomThumb />
    </BottomScroll>
  </WidePanel>
);

export default function App() {
  return (
    <Screen>
      <GlobalStyle />
      <TopBar>
        <MenuRow>
          <Menu>
            {MENUS.map(([before, key, after]) => (
              <MenuItem key={before + key + after}>{before}<u>{key}</u>{after}</MenuItem>
            ))}
          </Menu>
          <QuickAccess>
            <svg width="24" height="18" viewBox="0 0 24 18" aria-hidden="true">
              <circle cx="8" cy="8" r="6" fill="none" stroke="#999" strokeWidth="1.800" />
              <path d="M12 12l4 4" stroke="#999" strokeWidth="3.200" />
              <path d="M17 7h5l-2.500 3z" fill="#888" />
            </svg>
            <QuickInput aria-label="Quick Access" defaultValue="Quick Access" />
          </QuickAccess>
        </MenuRow>
        <MainTools>
          {MAIN_TOOLS.map((t) => (
            <MainTool key={t.label} aria-label={t.label} $narrow={t.narrow}>
              {t.icon}
              {t.corner && (
                <Corner width="7" height="7" viewBox="0 0 7 7"><path d="M7 0v7H0z" fill="#444" /></Corner>
              )}
            </MainTool>
          ))}
        </MainTools>
      </TopBar>
      <Body>
        <FlowNavigator />
        <Workspace>
          <DesignTitle><b>SYNTHESIZED DESIGN</b> - xc7z015clg485-1  <span>(active)</span></DesignTitle>
          <Docks>
            <NetlistPanel />
            <SchematicPanel />
            <CellPanel />
            <PortsPanel />
          </Docks>
        </Workspace>
      </Body>
      <Watermark>CSDN @伊宇韵</Watermark>
    </Screen>
  );
}
